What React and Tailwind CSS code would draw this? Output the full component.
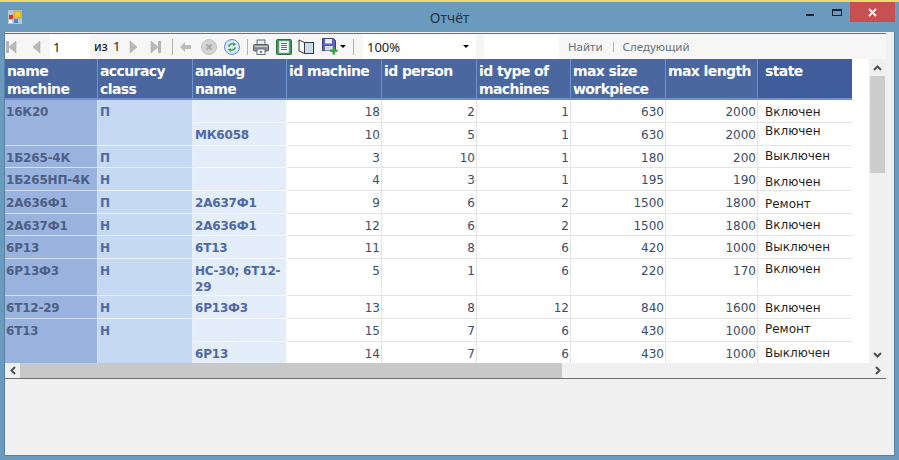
const tahoma = '[font-family:"DejaVu_Sans",sans-serif]';

const cols = [93, 95, 94, 95, 95, 94, 95, 92, 94];

const headers = [
  ['name', 'machine'],
  ['accuracy', 'class'],
  ['analog', 'name'],
  ['id machine'],
  ['id person'],
  ['id type of', 'machines'],
  ['max size', 'workpiece'],
  ['max length'],
];

// span: the name and accuracy cells run over two rows
const rows = [
  { h: 'h-[23px]', name: '16К20', acc: 'П', span: 2, analog: '', n: [18, 2, 1, 630, 2000], state: 'Включен', pt: 'pt-[4px]' },
  { h: 'h-[23px]', analog: 'МК6058', n: [10, 5, 1, 630, 2000], state: 'Включен', pt: 'pt-0' },
  { h: 'h-[22px]', name: '1Б265-4К', acc: 'П', analog: '', n: [3, 10, 1, 180, 200], state: 'Выключен', pt: 'pt-[2px]' },
  { h: 'h-[23px]', name: '1Б265НП-4К', acc: 'Н', analog: '', n: [4, 3, 1, 195, 190], state: 'Включен', pt: 'pt-[6px]' },
  { h: 'h-[23px]', name: '2А636Ф1', acc: 'П', analog: '2А637Ф1', n: [9, 6, 2, 1500, 1800], state: 'Ремонт', pt: 'pt-[5px]' },
  { h: 'h-[22px]', name: '2А637Ф1', acc: 'Н', analog: '2А636Ф1', n: [12, 6, 2, 1500, 1800], state: 'Включен', pt: 'pt-[3px]' },
  { h: 'h-[23px]', name: '6Р13', acc: 'Н', analog: '6Т13', n: [11, 8, 6, 420, 1000], state: 'Выключен', pt: 'pt-[3px]' },
  { h: 'h-[37px]', name: '6Р13Ф3', acc: 'Н', analog: 'НС-30; 6Т12-29', n: [5, 1, 6, 220, 170], state: 'Включен', pt: 'pt-[2px]' },
  { h: 'h-[23px]', name: '6Т12-29', acc: 'Н', analog: '6Р13Ф3', n: [13, 8, 12, 840, 1600], state: 'Включен', pt: 'pt-[4px]' },
  { h: 'h-[23px]', name: '6Т13', acc: 'Н', span: 2, analog: '', n: [15, 7, 6, 430, 1000], state: 'Ремонт', pt: 'pt-[2px]' },
  { h: 'h-[23px]', analog: '6Р13', n: [14, 7, 6, 430, 1000], state: 'Выключен', pt: 'pt-[3px]' },
];

function Triangle({ dir, bar }) {
  const left = dir === 'left';
  return (
    <svg width="11" height="14" viewBox="0 0 11 14">
      {bar && <rect x={left ? 0 : 8} y="1" width="3" height="12" fill="#b5b5b5" />}
      <path d={left ? 'M10 1v12L3 7z' : 'M1 1v12l7-6z'} fill="#b9b9b9" stroke="#a5a5a5" strokeWidth="0.5" />
    </svg>
  );
}

function Sep({ cls }) {
  return <div className={`w-px bg-[#b4b4b4] shrink-0 ${cls}`} />;
}

function StopIcon() {
  return (
    <svg width="16" height="16" viewBox="0 0 16 16">
      <circle cx="8" cy="8" r="7.500" fill="#d4d4d4" stroke="#c2c2c2" />
      <path d="M5.500 5.500l5 5M10.500 5.500l-5 5" stroke="#a9a9a9" strokeWidth="2" />
    </svg>
  );
}

function RefreshIcon() {
  return (
    <svg width="16" height="16" viewBox="0 0 16 16">
      <circle cx="8" cy="8" r="7.500" fill="#d8e8fa" stroke="#5d8fd0" />
      <path d="M4 7.500C4.500 5 7 3.600 9.600 4.600L9 3l3 2.200-3 1.800.3-1.200C7.500 5.200 6 6 5.600 7.800z" fill="#2f9a35" />
      <path d="M12 8.500C11.500 11 9 12.400 6.400 11.400L7 13 4 10.800l3-1.800-.3 1.200C8.500 10.800 10 10 10.400 8.200z" fill="#2f9a35" />
    </svg>
  );
}

function PrintIcon() {
  return (
    <svg width="16" height="16" viewBox="0 0 16 16">
      <rect x="4" y="1" width="8" height="5" fill="#e8e8e8" stroke="#666b73" />
      <rect x="0.500" y="5.500" width="15" height="6.500" rx="1" fill="#8b929b" stroke="#5d636b" />
      <rect x="2" y="7" width="12" height="1" fill="#c9ced4" />
      <rect x="4" y="10" width="8" height="5.500" fill="#fff" stroke="#666b73" />
      <rect x="7" y="12" width="2" height="2" fill="#3f7fd0" />
    </svg>
  );
}

function PageIcon() {
  return (
    <svg width="16" height="16" viewBox="0 0 16 16">
      <rect x="0.500" y="0.500" width="15" height="15" rx="1" fill="#3f9a55" stroke="#2f6d3f" />
      <rect x="3" y="2" width="10" height="12" fill="#f4f8ff" stroke="#8aa" strokeWidth="0.500" />
      <path d="M5 4.500h6M5 6.500h6M5 8.500h6M5 10.500h6" stroke="#56708f" />
    </svg>
  );
}

function BookIcon() {
  return (
    <svg width="16" height="16" viewBox="0 0 16 16">
      <path d="M6.500 3.500L1 1v11l5.500 2.500z" fill="#f6f6f6" stroke="#3b3b3b" />
      <rect x="6.500" y="3.500" width="9" height="11" fill="#c9dcf2" stroke="#3b3b3b" />
    </svg>
  );
}

function SaveIcon() {
  return (
    <svg width="16" height="18" viewBox="0 0 16 18">
      <path d="M0.500 0.500h11l2 2v10h-13z" fill="#5a63b8" stroke="#3a3f80" />
      <rect x="3" y="1" width="7" height="4.500" fill="#e9eef8" />
      <rect x="3" y="8" width="8" height="4.500" fill="#d5d9e8" />
      <path d="M11 10v2.500H8.500V15H11v2.500h2.500V15H16v-2.500h-2.500V10z" transform="translate(-0.500 -1)" fill="#35a84a" />
    </svg>
  );
}

function Caret() {
  return <div className="w-0 h-0 border-x-[3px] border-x-transparent border-t-[3px] border-t-black shrink-0" />;
}

function Toolbar() {
  return (
    <div className="h-[26px] shrink-0 flex items-center bg-[#f6f6f6] border-t border-[#6f7378] text-[#222] [font-family:'Noto_Sans',sans-serif] text-[13px]">
      <div className="ml-[1px]"><Triangle dir="left" bar /></div>
      <div className="ml-[13px]"><Triangle dir="left" /></div>
      <div className="ml-[9px] w-[40px] h-[24px] bg-white pl-[3px] leading-[24px] shrink-0">1</div>
      <span className="ml-[4px] w-[19px] text-[12px] font-medium">из</span>
      <span className="w-[16px]">1</span>
      <Triangle dir="right" />
      <div className="ml-[10px]"><Triangle dir="right" bar /></div>
      <Sep cls="ml-[11px] h-[16px]" />
      <svg className="ml-[7px]" width="11" height="10" viewBox="0 0 11 10">
        <path d="M0 5l5-5v3h6v4H5v3z" fill="#bdbdbd" />
      </svg>
      <div className="ml-[10px]"><StopIcon /></div>
      <div className="ml-[7px]"><RefreshIcon /></div>
      <Sep cls="ml-[7px] h-[16px]" />
      <div className="ml-[5px]"><PrintIcon /></div>
      <div className="ml-[7px]"><PageIcon /></div>
      <div className="ml-[6px]"><BookIcon /></div>
      <div className="ml-[8px]"><SaveIcon /></div>
      <div className="ml-[2px]"><Caret /></div>
      <Sep cls="ml-[7px] h-[16px]" />
      <div className="ml-[9px] w-[113px] h-[24px] bg-white pl-[4px] leading-[24px] flex items-center justify-between pr-[7px] shrink-0">
        <span>100%</span>
        <Caret />
      </div>
      <div className="ml-[8px] w-[75px] h-[24px] bg-white shrink-0" />
      <span className="ml-[9px] text-[#6b7078] text-[11.5px]">Найти</span>
      <Sep cls="ml-[10px] h-[10px]" />
      <span className="ml-[9px] text-[#6b7078] text-[11.5px]">Следующий</span>
    </div>
  );
}

function Grid() {
  return (
    <div className="flex-1 min-w-0 bg-white overflow-hidden">
      <table className={`table-fixed border-separate border-spacing-0 w-[847px] ${tahoma}`}>
        <colgroup>
          {cols.map((w, i) => <col key={i} style={{ width: w }} />)}
        </colgroup>
        <thead>
          <tr className="h-[41px]">
            {headers.map((lines, i) => (
              <th key={i} className="bg-[#4a67a0] border-r border-b-2 border-[#6f92cf] align-top text-left pl-[2px] pt-[3px] text-white text-[14px] tracking-[-0.6px] font-bold leading-[18px] whitespace-nowrap">
                {lines.map(l => <div key={l}>{l}</div>)}
              </th>
            ))}
            <th className="bg-[#3f5d9b] border-b-2 border-[#6f92cf] align-top text-left pl-[7px] pt-[3px] text-white text-[14px] tracking-[-0.6px] font-bold leading-[18px]">state</th>
          </tr>
        </thead>
        <tbody className="text-[12px] leading-[16px]">
          {rows.map((r, i) => (
            <tr key={i} className={r.h}>
              {r.name && (
                <td rowSpan={r.span || 1} className="bg-[#9ab3de] border-r border-b border-[#d5e1f4] align-top pl-[1px] pt-[4px] font-bold tracking-[-0.2px] text-[#4d5f85] whitespace-nowrap overflow-hidden">{r.name}</td>
              )}
              {r.name && (
                <td rowSpan={r.span || 1} className="bg-[#c5d9f3] border-r border-b border-[#e6effb] align-top pl-[2px] pt-[4px] font-bold text-[#4e69a5]">{r.acc}</td>
              )}
              <td className="bg-[#e4edfa] border-r border-b border-[#f6f9fe] align-top pl-[2px] pt-[4px] font-bold tracking-[-0.2px] text-[#4e69a5]">{r.analog}</td>
              {r.n.map((v, j) => (
                <td key={j} className="border-r border-b border-[#e4e4e4] align-top text-right pr-[1px] pt-[4px] text-[#3c4c68]">{v}</td>
              ))}
              <td className={`border-b border-[#e4e4e4] align-top pl-[7px] text-[#1f1f1f] ${r.pt}`}>{r.state}</td>
            </tr>
          ))}
        </tbody>
      </table>
    </div>
  );
}

function VScroll() {
  return (
    <div className="w-[17px] shrink-0 flex flex-col bg-[#f0f0f0]">
      <div className="h-[17px] flex items-center justify-center">
        <svg width="9" height="6" viewBox="0 0 9 6"><path d="M1 5l3.500-3.500L8 5" fill="none" stroke="#505050" strokeWidth="2" /></svg>
      </div>
      <div className="h-[97px] bg-[#cdcdcd] mx-px" />
      <div className="flex-1" />
      <div className="h-[17px] flex items-center justify-center">
        <svg width="9" height="6" viewBox="0 0 9 6"><path d="M1 1l3.500 3.500L8 1" fill="none" stroke="#505050" strokeWidth="2" /></svg>
      </div>
    </div>
  );
}

function HScroll() {
  return (
    <div className="h-[15px] shrink-0 flex bg-[#f0f0f0] items-stretch">
      <div className="w-[15px] flex items-center justify-center">
        <svg width="6" height="9" viewBox="0 0 6 9"><path d="M5 1L1.500 4.500 5 8" fill="none" stroke="#505050" strokeWidth="2" /></svg>
      </div>
      <div className="w-[542px] bg-[#c8c8c8]" />
      <div className="flex-1" />
      <div className="w-[17px] flex items-center justify-center">
        <svg width="6" height="9" viewBox="0 0 6 9"><path d="M1 1l3.500 3.500L1 8" fill="none" stroke="#505050" strokeWidth="2" /></svg>
      </div>
    </div>
  );
}

export default function App() {
  return (
    <div className="w-[899px] h-[460px] flex flex-col bg-[#6a9abe] border-t-[2px] border-[#ecd96f] overflow-hidden">
      <div className="h-[30px] shrink-0 grid grid-cols-[1fr_auto_1fr] items-center">
        <div className="pl-[8px]">
          <svg width="14" height="14" viewBox="0 0 14 14">
            <rect width="14" height="14" fill="#b9c6d4" />
            <rect x="6" y="1" width="7" height="7" fill="#f3c531" stroke="#a8821b" strokeWidth="0.500" />
            <rect x="1" y="5" width="4" height="4" fill="#d5352a" />
            <rect x="1" y="10" width="3" height="3" fill="#fff" />
            <rect x="6" y="9" width="4" height="4" fill="#4b84d8" />
          </svg>
        </div>
        <div className="text-[14px] text-[#1f3446] [font-family:'Noto_Sans',sans-serif]">Отчёт</div>
        <div className="flex justify-end items-start h-full pr-[4px]">
          <div className="w-[8px] h-[2px] bg-[#16212b] mt-[12px] mr-[18px]" />
          <div className="w-[10px] h-[7px] border border-t-2 border-[#16212b] mt-[7px] mr-[8px]" />
          <div className="w-[45px] h-[20px] bg-[#c75050] flex items-center justify-center">
            <svg width="9" height="9" viewBox="0 0 9 9"><path d="M1 1l7 7M8 1l-7 7" stroke="#fff" strokeWidth="1.800" /></svg>
          </div>
        </div>
      </div>
      <div className="flex-1 min-h-0 ml-[4px] mr-[4px] mb-[4px] flex flex-col bg-[#f0f0f0] border-x border-b border-[#5582a5]">
        <div className="mr-[8px] pt-px flex flex-col flex-1 min-h-0">
          <Toolbar />
          <div className="h-[304px] shrink-0 flex bg-white">
            <Grid />
            <VScroll />
          </div>
          <HScroll />
          <div className="h-px bg-[#6e6e6e] shrink-0" />
        </div>
      </div>
    </div>
  );
}
